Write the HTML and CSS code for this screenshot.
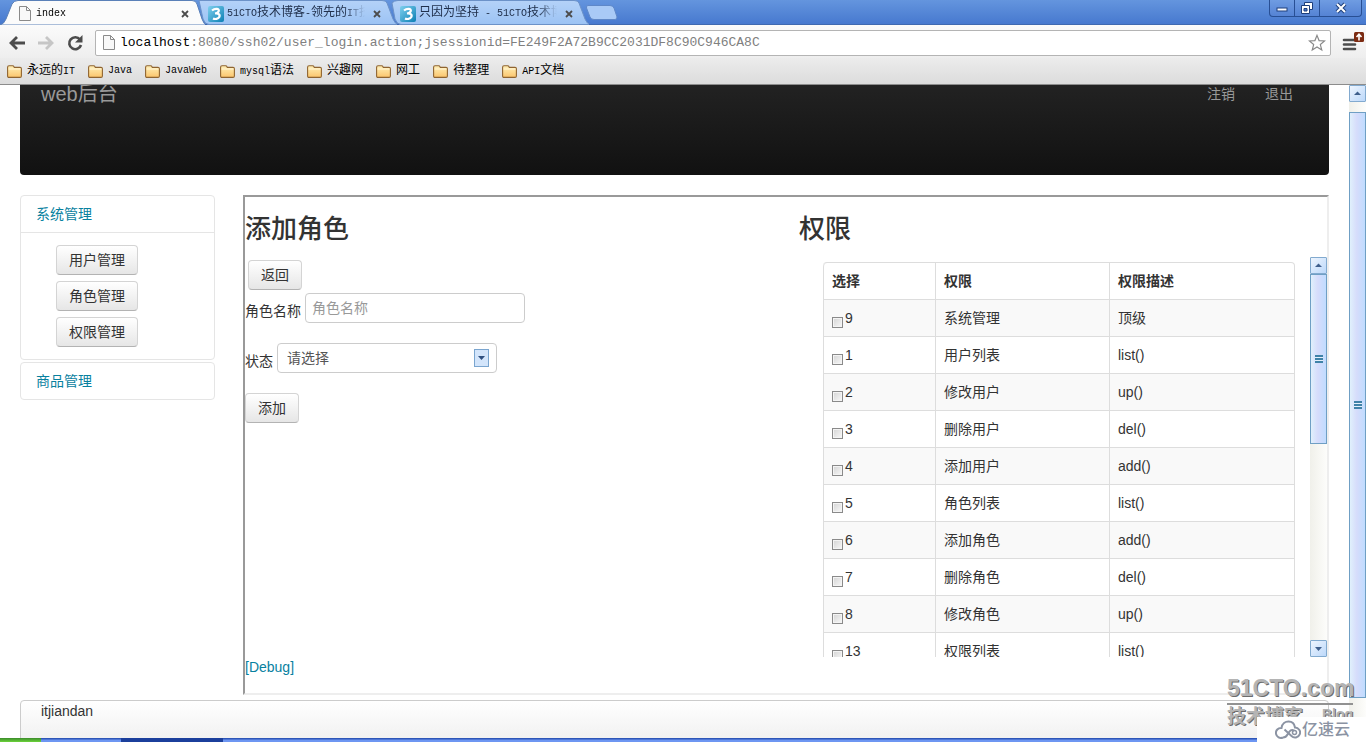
FILE: index.html
```html
<!DOCTYPE html>
<html lang="zh-CN">
<head>
<meta charset="utf-8">
<title>index</title>
<link rel="stylesheet" href="styles.css">
</head>
<body>
<svg class="defs" aria-hidden="true">
  <defs>
    <linearGradient id="tabBlue" x1="0" y1="0" x2="0" y2="1"><stop offset="0" stop-color="#b4d2f8"/><stop offset="1" stop-color="#9cc3f4"/></linearGradient>
    <linearGradient id="folderFill" x1="0" y1="0" x2="0" y2="1"><stop offset="0" stop-color="#fff0b8"/><stop offset="1" stop-color="#fbc56c"/></linearGradient>
    <linearGradient id="favFill" x1="0" y1="0" x2="1" y2="1"><stop offset="0" stop-color="#7fd0ee"/><stop offset="1" stop-color="#0b7fb4"/></linearGradient>
    <symbol id="page" viewBox="0 0 12 15"><path d="M.5.5h7l4 4v10H.5z" fill="#f8f8f8" stroke="#8a8a8a"/><path d="M7.5.5v4h4" fill="none" stroke="#8a8a8a"/></symbol>
    <symbol id="folder" viewBox="0 0 15 13"><path d="M.6 11V2.3Q.6.7 2 .7h3.6q1 0 1.300.8l.4.9H13q1.400 0 1.400 1.400V11q0 1.400-1.400 1.400H2Q.6 12.400.6 11z" fill="url(#folderFill)" stroke="#8f6430" stroke-width="1.100"/><path d="M1.500 4h12" stroke="#fff6d8" stroke-width="1"/></symbol>
    <symbol id="fav" viewBox="0 0 16 16"><rect width="16" height="16" rx="2" fill="url(#favFill)"/><path d="M4 4.500C7 2 11.500 2.500 10.800 5 10.300 6.700 8.500 7.300 7 7.500 10 7 12.500 8.500 11.300 11 10.300 13 7 13.500 5 12.500" fill="none" stroke="#fff" stroke-width="2.200"/></symbol>
    <symbol id="close" viewBox="0 0 8 8"><path d="M1 1l6 6M7 1L1 7" stroke="#4c4c4c" stroke-width="1.800"/></symbol>
    <symbol id="up" viewBox="0 0 15 15"><path d="M4 9h7L7.500 5.500z" fill="#3f5f8c"/></symbol>
    <symbol id="down" viewBox="0 0 15 15"><path d="M4 6h7l-3.500 4z" fill="#3f5f8c"/></symbol>
  </defs>
</svg>

<header class="browser">
  <div class="tabstrip">
    <div class="tab">
      <svg class="tab-shape" viewBox="0 0 205 25"><path d="M0 25Q4 24 6 19L12 4Q14 .5 18 .5H192Q196 .5 197 4L202 19Q204 25 207 25z" fill="#fbfbfb" stroke="#5a80b8"/></svg>
      <svg class="tab-page"><use href="#page"/></svg>
      <span class="tab-title">index</span>
      <button class="tab-close" aria-label="关闭标签页"><svg><use href="#close"/></svg></button>
    </div>
    <div class="tab tab-back">
      <svg class="tab-shape" viewBox="0 0 205 25"><path d="M7 .5H190Q194 .5 195 3L201 19Q203 24.500 207 24.500H17Q13 24.500 11 19z" fill="url(#tabBlue)" stroke="#6c92c8"/></svg>
      <svg class="tab-fav"><use href="#fav"/></svg>
      <span class="tab-title">51CTO<span class="cn">技术博客</span>-<span class="cn">领先的</span>IT<span class="cn">技术</span></span>
      <button class="tab-close" aria-label="关闭标签页"><svg><use href="#close"/></svg></button>
    </div>
    <div class="tab tab-back">
      <svg class="tab-shape" viewBox="0 0 205 25"><path d="M8 3Q10 .5 14 .5H190Q194 .5 195 3L201 19Q203 24.500 207 24.500H17Q13 24.500 11 19z" fill="url(#tabBlue)" stroke="#6c92c8"/></svg>
      <svg class="tab-fav"><use href="#fav"/></svg>
      <span class="tab-title"><span class="cn">只因为坚持</span> - 51CTO<span class="cn">技术博客</span></span>
      <button class="tab-close" aria-label="关闭标签页"><svg><use href="#close"/></svg></button>
    </div>
    <button class="new-tab" aria-label="新标签页"><svg viewBox="0 0 32 16"><path d="M2 .5H24Q27 .5 28 3L31 12Q31 14.500 29 14.500H8Q5 14.500 4 12L.5 3Q0 .5 2 .5z" fill="#a9caf6" stroke="#5f88c8"/></svg></button>
    <div class="window-buttons">
      <button aria-label="最小化"><svg viewBox="0 0 16 16"><rect x="3" y="8" width="10" height="3" fill="#fff" stroke="#1e3f7c"/></svg></button>
      <button aria-label="还原"><svg viewBox="0 0 16 16"><path d="M5.500 2.500h8v7h-8z" fill="#fff" stroke="#1e3f7c"/><path d="M2.500 5.500h8v8h-8z" fill="#fff" stroke="#1e3f7c"/><path d="M5 8.500h3v2.500H5z" fill="#4a7ad0" stroke="#1e3f7c"/></svg></button>
      <button class="wide" aria-label="关闭"><svg viewBox="0 0 16 16"><path d="M4 4l8 8M12 4l-8 8" stroke="#1e3f7c" stroke-width="4"/><path d="M4 4l8 8M12 4l-8 8" stroke="#fff" stroke-width="2"/></svg></button>
    </div>
  </div>

  <div class="toolbar">
    <button class="tool" aria-label="后退"><svg viewBox="0 0 18 18"><path d="M17 9H4M9 3L3 9l6 6" fill="none" stroke="#4c4c4c" stroke-width="2.800"/></svg></button>
    <button class="tool" aria-label="前进"><svg viewBox="0 0 18 18"><path d="M1 9h13M9 3l6 6-6 6" fill="none" stroke="#c6c6c6" stroke-width="2.800"/></svg></button>
    <button class="tool" aria-label="刷新"><svg viewBox="0 0 18 18"><path d="M14 5.500A6 6 0 1 0 15 11" fill="none" stroke="#4c4c4c" stroke-width="2.600"/><path d="M16.500 1v7.500H9z" fill="#4c4c4c"/></svg></button>
    <div class="address">
      <svg class="address-page"><use href="#page"/></svg>
      <span class="url"><b>localhost</b>:8080/ssh02/user_login.action;jsessionid=FE249F2A72B9CC2031DF8C90C946CA8C</span>
      <button class="star" aria-label="收藏"><svg viewBox="0 0 20 20"><path d="M10 1.500l2.300 5.800 6.200.4-4.800 4 1.600 6.100L10 14.500l-5.300 3.300 1.600-6.100-4.800-4 6.200-.4z" fill="#fff" stroke="#888" stroke-width="1.300"/></svg></button>
    </div>
    <button class="menu" aria-label="菜单"><svg viewBox="0 0 24 24"><path d="M3 9h11M3 13.500h11M3 18h11" stroke="#4c4c4c" stroke-width="2.600" stroke-linecap="round"/><rect x="13" y="1" width="10" height="10" rx="1.500" fill="#7c2b12"/><path d="M18 9.500V4M15.500 6L18 3.300 20.500 6" fill="none" stroke="#fff" stroke-width="1.600"/></svg></button>
  </div>

  <nav class="bookmarks">
    <a href="#"><svg><use href="#folder"/></svg><span><span class="cn">永远的</span>IT</span></a>
    <a href="#"><svg><use href="#folder"/></svg><span>Java</span></a>
    <a href="#"><svg><use href="#folder"/></svg><span>JavaWeb</span></a>
    <a href="#"><svg><use href="#folder"/></svg><span>mysql<span class="cn">语法</span></span></a>
    <a href="#"><svg><use href="#folder"/></svg><span class="cn">兴趣网</span></a>
    <a href="#"><svg><use href="#folder"/></svg><span class="cn">网工</span></a>
    <a href="#"><svg><use href="#folder"/></svg><span class="cn">待整理</span></a>
    <a href="#"><svg><use href="#folder"/></svg><span>API<span class="cn">文档</span></span></a>
  </nav>
</header>

<div class="viewport">
  <div class="site">
    <div class="navbar">
      <a class="brand" href="#">web后台</a>
      <a class="nav-link" href="#">注销</a>
      <a class="nav-link" href="#">退出</a>
    </div>
    <div class="columns">
      <aside class="sidebar">
        <section class="group">
          <a class="group-title" href="#">系统管理</a>
          <div class="group-body">
            <button class="btn">用户管理</button>
            <button class="btn">角色管理</button>
            <button class="btn">权限管理</button>
          </div>
        </section>
        <section class="group">
          <a class="group-title" href="#">商品管理</a>
        </section>
      </aside>
      <main class="frame">
        <div class="frame-row">
          <form class="role-form">
            <h3>添加角色</h3>
            <div class="back"><button type="button" class="btn">返回</button></div>
            <div class="field"><label for="name">角色名称</label><input id="name" type="text" placeholder="角色名称"></div>
            <div class="field"><label for="state">状态</label><span class="select-box"><select id="state"><option>请选择</option></select><svg class="select-arrow" viewBox="0 0 15 18"><rect x=".5" y=".5" width="14" height="17" fill="#d3e5fb" stroke="#7aa5cf"/><path d="M4 7h7l-3.500 4z" fill="#2f5080"/></svg></span></div>
            <button type="button" class="btn">添加</button>
          </form>
          <section class="rights">
            <h3>权限</h3>
            <div class="scroller">
              <div class="table-box">
                <table>
                  <thead><tr><th class="c1">选择</th><th class="c2">权限</th><th>权限描述</th></tr></thead>
                  <tbody>
                    <tr><td><label><input type="checkbox">9</label></td><td>系统管理</td><td>顶级</td></tr>
                    <tr><td><label><input type="checkbox">1</label></td><td>用户列表</td><td>list()</td></tr>
                    <tr><td><label><input type="checkbox">2</label></td><td>修改用户</td><td>up()</td></tr>
                    <tr><td><label><input type="checkbox">3</label></td><td>删除用户</td><td>del()</td></tr>
                    <tr><td><label><input type="checkbox">4</label></td><td>添加用户</td><td>add()</td></tr>
                    <tr><td><label><input type="checkbox">5</label></td><td>角色列表</td><td>list()</td></tr>
                    <tr><td><label><input type="checkbox">6</label></td><td>添加角色</td><td>add()</td></tr>
                    <tr><td><label><input type="checkbox">7</label></td><td>删除角色</td><td>del()</td></tr>
                    <tr><td><label><input type="checkbox">8</label></td><td>修改角色</td><td>up()</td></tr>
                    <tr><td><label><input type="checkbox">13</label></td><td>权限列表</td><td>list()</td></tr>
                  </tbody>
                </table>
              </div>
              <div class="scrollbar">
                <svg class="sb-button"><use href="#up"/></svg>
                <div class="sb-thumb sb-thumb-inner"><i class="grip"></i></div>
                <div class="sb-rest"></div>
                <svg class="sb-button"><use href="#down"/></svg>
              </div>
            </div>
          </section>
        </div>
        <a class="debug" href="#">[Debug]</a>
      </main>
    </div>
    <footer class="site-footer">itjiandan</footer>
  </div>
  <div class="scrollbar page-scrollbar">
    <svg class="sb-button"><use href="#up"/></svg>
    <div class="sb-thumb sb-thumb-page"><i class="grip"></i></div>
    <div class="sb-foot"></div>
  </div>
</div>

<div class="taskbar"><span class="start"></span><span class="task-active"></span></div>

<div class="watermark">
  <div class="wm-name">51CTO.com</div>
  <div class="wm-sub"><span>技术博客</span><span class="wm-blog">Blog</span></div>
</div>
<div class="cloud">
  <svg viewBox="0 0 26 20"><path d="M8 17.500A5 5 0 1 1 6.500 8C7 3.500 10.500 1.500 13.500 1.500c3.500 0 6 2.500 6.500 6a5 5 0 1 1-3.500 8.500L9.500 9.500M8 17.500c2 0 3.500-1 4.500-3l2-3c1.500-2 4-2 5-.5" fill="none" stroke="#8b93a3" stroke-width="2"/><circle cx="19.500" cy="12.500" r="2" fill="none" stroke="#8b93a3" stroke-width="1.500"/></svg>
  <span>亿速云</span>
</div>
</body>
</html>
```

FILE: styles.css
```css
* { box-sizing: border-box; }
html, body { height: 100%; }
body {
  margin: 0;
  display: flex;
  flex-direction: column;
  position: relative;
  overflow: hidden;
  background: #fff;
  color: #333;
  font: 14px/20px "Liberation Sans", "Noto Sans CJK SC", sans-serif;
}
a { color: #08819f; text-decoration: none; }
button, input, select { font: inherit; color: inherit; margin: 0; }
.defs { position: absolute; width: 0; height: 0; }

/* Browser chrome */
.browser { flex: none; font: 10px/16px "Liberation Mono", "Noto Sans CJK SC", monospace; color: #000; border-bottom: 1px solid #8c8c8c; }
.browser button { border: 0; padding: 0; background: none; display: flex; align-items: center; justify-content: center; }
.cn { font-size: 12px; }
.tabstrip { height: 25px; display: flex; background: linear-gradient(#6495de, #4779cf); border-bottom: 1px solid #3f69b0; }
.tab { position: relative; flex: none; width: 205px; height: 25px; margin-right: -13px; padding: 2px 16px 0 19px; display: flex; align-items: center; z-index: 2; }
.tab-back { padding-left: 16px; z-index: 1; color: #20304c; }
.tab-shape { position: absolute; left: 0; top: 0; width: 205px; height: 25px; z-index: -1; }
.tab-page { width: 12px; height: 15px; margin-right: 5px; flex: none; }
.tab-fav { width: 16px; height: 16px; margin-right: 3px; flex: none; }
.tab-title { width: 138px; overflow: hidden; white-space: pre; mask-image: linear-gradient(90deg, #000 86%, transparent); }
.tab-close { margin-left: auto; }
.tab-close svg { width: 8px; height: 8px; }
.new-tab { width: 32px; margin: 5px 0 0 10px; align-self: flex-start; }
.new-tab svg { width: 32px; height: 16px; flex: none; }
.window-buttons { display: flex; height: 17px; margin: 0 4px 0 auto; border: 1px solid #284f94; border-top: 0; border-radius: 0 0 4px 4px; background: linear-gradient(#6f9ce2, #5583d4); }
.window-buttons button { width: 25px; border-right: 1px solid #284f94; }
.window-buttons .wide { width: 41px; border-right: 0; }
.window-buttons svg { width: 16px; height: 16px; }
.toolbar { display: flex; align-items: center; height: 33px; padding: 2px 0 0 8px; background: linear-gradient(#fbfbfb, #eee); }
.tool { width: 18px; height: 18px; margin-right: 11px; }
.tool svg { width: 18px; height: 18px; }
.address { flex: 1; height: 26px; display: flex; align-items: center; padding: 0 4px 0 7px; background: #fff; border: 1px solid #b4b4b4; border-radius: 2px; }
.address-page { width: 12px; height: 15px; margin-right: 5px; }
.url { font-size: 13px; color: #808080; }
.url b { font-weight: 400; color: #000; }
.star { margin-left: auto; }
.star svg { width: 18px; height: 18px; }
.menu { width: 24px; margin: 0 1px 0 10px; }
.menu svg { width: 24px; height: 24px; }
.bookmarks { height: 26px; display: flex; align-items: center; gap: 13px; padding-left: 7px; background: linear-gradient(#ececec, #dcdcdc); }
.bookmarks a { display: flex; align-items: center; gap: 5px; color: #000; }
.bookmarks svg { width: 15px; height: 13px; }

/* Page area */
.viewport { flex: 1; min-height: 0; display: flex; overflow: hidden; }
.site { flex: 1; min-width: 0; padding: 0 20px; }
.navbar { height: 90px; display: flex; align-items: flex-start; gap: 30px; padding: 0 36px 0 21px; line-height: 18px; background: linear-gradient(#222, #111); border-radius: 0 0 4px 4px; }
.navbar a { color: #999; }
.brand { font-size: 20px; margin-right: auto; }
.columns { display: flex; gap: 28px; align-items: flex-start; margin-top: 20px; }
.sidebar { flex: none; width: 195px; display: grid; gap: 2px; }
.group { border: 1px solid #e5e5e5; border-radius: 4px; }
.group-title { display: block; padding: 8px 15px; }
.group-body { border-top: 1px solid #e5e5e5; padding: 12px 35px; display: grid; gap: 6px; justify-items: start; }
.btn { height: 30px; padding: 0 12px; border: 1px solid #d4d4d4; border-bottom-color: #b3b3b3; border-radius: 4px; background: linear-gradient(#fff, #e6e6e6); line-height: 20px; flex: none; }

.frame { flex: 1; min-width: 0; height: 500px; border: 2px solid #999; border-right-color: #eee; border-bottom-color: #eee; }
.frame-row { display: flex; height: 460px; }
h3 { margin: 0; padding: 12px 0 8px; font-size: 26px; line-height: 40px; font-weight: 500; }
.role-form { flex: 1; }
.back { padding: 3px 3px; height: 36px; }
.field { display: flex; align-items: flex-start; gap: 4px; height: 50px; }
.field label { padding-top: 8px; }
input[type="text"], select { width: 220px; height: 30px; border: 1px solid #ccc; border-radius: 4px; background: #fff; color: #555; padding: 4px 6px; }
input::placeholder { color: #999; opacity: 1; }
select { appearance: none; padding: 0 9px; }
.select-box { position: relative; }
.select-arrow { position: absolute; right: 8px; top: 6px; width: 15px; height: 18px; pointer-events: none; }
.rights { width: 528px; }
.scroller { display: flex; justify-content: space-between; height: 400px; padding-left: 24px; overflow: hidden; }
.table-box { flex: 1; margin: 5px 15px 0 0; }
table { width: 100%; border-collapse: separate; border-spacing: 0; border: 1px solid #ddd; border-left: 0; border-radius: 4px; table-layout: fixed; }
th, td { height: 37px; padding: 8px; text-align: left; border-left: 1px solid #ddd; line-height: 20px; }
thead th { height: 36px; }
td { border-top: 1px solid #ddd; }
th:first-child { border-top-left-radius: 4px; }
.c1 { width: 112px; }
.c2 { width: 174px; }
tbody tr:nth-child(odd) { background: #f9f9f9; }
td label { display: flex; align-items: center; gap: 2px; }
input[type="checkbox"] { appearance: none; width: 11px; height: 11px; margin-top: 8px; border: 1px solid #8a8a8a; background: linear-gradient(135deg, #d4d4d4, #f8f8f8); box-shadow: inset 0 0 0 1px #f4f4f4; }
.debug { display: block; }

.site-footer { margin-top: 5px; height: 60px; padding: 0 20px; border: 1px solid #ccc; border-radius: 4px; background: linear-gradient(#fff, #eaeaea); }

/* Scrollbars */
.scrollbar { flex: none; width: 17px; display: flex; flex-direction: column; background: linear-gradient(90deg, #f0f0ea, #fdfdfb); }
.sb-button { flex: none; width: 17px; height: 17px; border: 1px solid #82aacf; border-radius: 1px; background: linear-gradient(135deg, #eef5fe, #bcd8fa); }
.sb-thumb { display: flex; align-items: center; justify-content: center; border: 1px solid #6f9fc4; background: linear-gradient(90deg, #e0f0fc, #d6dcfb 45%, #c0dcff); }
.sb-thumb-inner { flex: 0 0 170px; }
.sb-thumb-page { flex: 1; margin-top: 10px; }
.sb-rest { flex: 1; }
.sb-foot { flex: 0 0 40px; }
.grip { width: 8px; height: 8px; background: repeating-linear-gradient(#3f82a8 0 2px, #e4f0fb 2px 3px); }

.taskbar { flex: none; height: 4px; display: flex; gap: 80px; background: linear-gradient(#2e56b8 25%, #6d96f2 50%); }
.start { width: 41px; background: linear-gradient(#3a8a2c, #6cd43a); }
.task-active { width: 102px; background: #1b3f9c; }

/* Overlays at the lower right corner */
.watermark { position: absolute; right: 13px; bottom: 12px; width: 126px; color: #b4b4b4; text-shadow: 1px 1px 0 #6c6c6c; font-family: "Liberation Sans Narrow", "Liberation Sans", "Noto Sans CJK SC", sans-serif; font-weight: 700; }
.wm-name { font-size: 23px; line-height: 30px; border-bottom: 2px solid #929292; }
.wm-sub { display: flex; justify-content: space-between; height: 25px; font-size: 19px; line-height: 24px; }
.wm-blog { font-size: 14px; line-height: 18px; }
.cloud { position: absolute; right: 0; bottom: 0; width: 109px; height: 25px; display: flex; align-items: center; gap: 1px; padding-left: 18px; background: #fff; color: #8b93a3; font-size: 16px; font-weight: 500; }
.cloud svg { width: 26px; height: 20px; }
```
